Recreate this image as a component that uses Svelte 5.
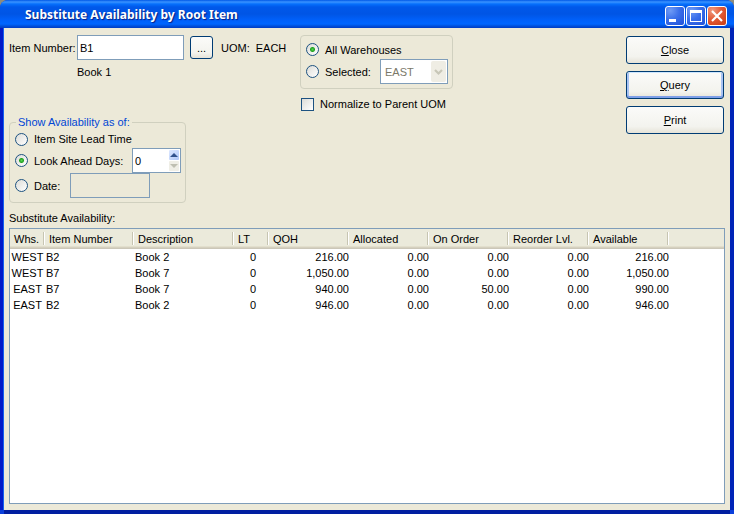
<script>
  let itemNumber = $state('B1');
  let warehouse = $state('all');
  let asOf = $state('days');
  let days = $state(0);
  let normalize = $state(false);

  const columns = [
    { name: 'Whs.', width: 35, align: 'center' },
    { name: 'Item Number', width: 89, align: 'left' },
    { name: 'Description', width: 100, align: 'left' },
    { name: 'LT', width: 35, align: 'mid' },
    { name: 'QOH', width: 80, align: 'right' },
    { name: 'Allocated', width: 80, align: 'right' },
    { name: 'On Order', width: 80, align: 'right' },
    { name: 'Reorder Lvl.', width: 80, align: 'right' },
    { name: 'Available', width: 80, align: 'right' }
  ];
  const rows = [
    ['WEST', 'B2', 'Book 2', '0', '216.00', '0.00', '0.00', '0.00', '216.00'],
    ['WEST', 'B7', 'Book 7', '0', '1,050.00', '0.00', '0.00', '0.00', '1,050.00'],
    ['EAST', 'B7', 'Book 7', '0', '940.00', '0.00', '50.00', '0.00', '990.00'],
    ['EAST', 'B2', 'Book 2', '0', '946.00', '0.00', '0.00', '0.00', '946.00']
  ];
</script>

<div class="window">
  <header class="titlebar">
    <h1>Substitute Availability by Root Item</h1>
    <div class="controls">
      <button class="ctl" aria-label="Minimize">
        <svg viewBox="0 0 18 18"><path d="M3 12h7v3H3z" fill="#fff" /></svg>
      </button>
      <button class="ctl" aria-label="Maximize">
        <svg viewBox="0 0 18 18"><path d="M3 3h12v12H3zM4 6v8h10V6z" fill="#fff" fill-rule="evenodd" /></svg>
      </button>
      <button class="ctl close" aria-label="Close window">
        <svg viewBox="0 0 18 18"><path d="M4 4l10 10M14 4L4 14" stroke="#fff" stroke-width="2.2" /></svg>
      </button>
    </div>
  </header>

  <main>
    <div class="top">
      <section class="left">
        <div class="item-row">
          <label for="item">Item Number:</label>
          <input id="item" class="field" type="text" bind:value={itemNumber} />
          <button class="btn browse">...</button>
          <span>UOM:</span>
          <span class="uom">EACH</span>
        </div>
        <p class="desc">Book 1</p>

        <fieldset class="asof">
          <legend>Show Availability as of:</legend>
          <div class="line short">
            <input id="lead" type="radio" name="asof" value="lead" bind:group={asOf} />
            <label for="lead">Item Site Lead Time</label>
          </div>
          <div class="line">
            <input id="ahead" type="radio" name="asof" value="days" bind:group={asOf} />
            <label for="ahead">Look Ahead Days:</label>
            <div class="spin">
              <input type="number" aria-label="Look ahead days" min="0" bind:value={days} />
              <div class="steps">
                <button aria-label="More days" onclick={() => (days += 1)}>
                  <svg viewBox="0 0 10 10"><path d="M5 3l4 4H1z" fill="#31528c" /></svg>
                </button>
                <button aria-label="Fewer days" disabled={days <= 0} onclick={() => (days -= 1)}>
                  <svg viewBox="0 0 10 10"><path d="M5 7L1 3h8z" fill="#bfbfb2" /></svg>
                </button>
              </div>
            </div>
          </div>
          <div class="line">
            <input id="date" type="radio" name="asof" value="date" bind:group={asOf} />
            <label for="date">Date:</label>
            <input class="field date" type="text" aria-label="As of date" disabled={asOf !== 'date'} />
          </div>
        </fieldset>
      </section>

      <section class="middle">
        <fieldset class="whs">
          <div class="line first">
            <input id="all" type="radio" name="whs" value="all" bind:group={warehouse} />
            <label for="all">All Warehouses</label>
          </div>
          <div class="line">
            <input id="selected" type="radio" name="whs" value="selected" bind:group={warehouse} />
            <label for="selected">Selected:</label>
            <div class="combo">
              <select aria-label="Warehouse" disabled={warehouse !== 'selected'}>
                <option>EAST</option>
                <option>WEST</option>
              </select>
              <svg viewBox="0 0 15 21"><path d="M4 9l3.500 3.500L11 9" fill="none" stroke="#c8c7b8" stroke-width="2.200" /></svg>
            </div>
          </div>
        </fieldset>
        <div class="line normalize">
          <input id="norm" type="checkbox" bind:checked={normalize} />
          <label for="norm">Normalize to Parent UOM</label>
        </div>
      </section>

      <section class="actions">
        <button class="btn"><u>C</u>lose</button>
        <button class="btn default"><u>Q</u>uery</button>
        <button class="btn"><u>P</u>rint</button>
      </section>
    </div>

    <h2 id="list-title">Substitute Availability:</h2>
    <div class="list">
      <table aria-labelledby="list-title">
        <colgroup>
          {#each columns as col}
            <col style="width: {col.width}px" />
          {/each}
          <col />
        </colgroup>
        <thead>
          <tr>
            {#each columns as col}
              <th scope="col">{col.name}</th>
            {/each}
            <td class="rest"></td>
          </tr>
        </thead>
        <tbody>
          {#each rows as row}
            <tr>
              {#each row as cell, i}
                <td class={columns[i].align}>{cell}</td>
              {/each}
              <td></td>
            </tr>
          {/each}
        </tbody>
      </table>
    </div>
  </main>
</div>

<style>
  :global(body) {
    background: #8e8c7c;
  }
  .window,
  .window * {
    box-sizing: border-box;
  }
  .window {
    display: flex;
    flex-direction: column;
    min-height: 100vh;
    background: #0a3fdc;
    border-radius: 8px 8px 0 0;
    font: 11px/16px 'Liberation Sans', Arial, sans-serif;
    color: #000;
  }
  button,
  input,
  select {
    font: inherit;
    color: inherit;
    margin: 0;
  }
  .titlebar {
    display: flex;
    align-items: center;
    justify-content: space-between;
    height: 28px;
    padding: 2px 7px 0 25px;
    border-radius: 8px 8px 0 0;
    background: linear-gradient(#0058e6 0, #3a93ff 2px, #0670fc 4px, #0058ea 7px, #0055e5 14px, #0060fa 20px, #0066ff 24px, #0050dc 26px, #003cc4 28px);
  }
  h1 {
    margin: 0;
    font: bold 12px/20px 'Noto Sans', 'Open Sans', sans-serif;
    color: #fff;
    text-shadow: 1px 1px 1px #0a1f80;
  }
  .controls {
    display: flex;
    gap: 1px;
    padding-top: 2px;
  }
  .ctl {
    width: 20px;
    height: 20px;
    padding: 0;
    border: 1px solid #fff;
    border-radius: 3px;
    background: radial-gradient(circle at 25% 20%, #6f9bf5, #3a6fea 45%, #1f50d8);
  }
  .ctl.close {
    background: radial-gradient(circle at 25% 20%, #f09a80, #e25a36 45%, #c83c12);
  }
  .ctl svg {
    display: block;
    width: 18px;
    height: 18px;
  }
  main {
    flex: 1;
    display: flex;
    flex-direction: column;
    margin: 0 4px 4px;
    padding: 7px 5px 6px;
    background: #ece9d8;
    box-shadow:
      -1px 0 #1560f0,
      -4px 0 #0019c8,
      4px 0 #0024b8,
      0 4px #001ea0;
  }
  .top {
    display: flex;
    align-items: flex-start;
  }
  .left {
    flex: 0 0 291px;
  }
  .item-row {
    display: flex;
    align-items: center;
    height: 25px;
  }
  .item-row label {
    flex: 0 0 68px;
    white-space: nowrap;
  }
  .field {
    width: 107px;
    height: 25px;
    padding: 0 2px;
    border: 1px solid #7f9db9;
    background: #fff;
  }
  .btn {
    height: 28px;
    padding: 0;
    border: 1px solid #003c74;
    border-radius: 3px;
    background: linear-gradient(#fbfbf9, #f3f3ee 75%, #e6e3d8);
  }
  .browse {
    width: 23px;
    height: 23px;
    margin: 0 8px 0 6px;
  }
  .uom {
    margin-left: 6px;
  }
  .desc {
    margin: 4px 0 34px 68px;
  }
  fieldset {
    margin: 0;
    min-width: 0;
    border: 1px solid #d0d0bf;
    border-radius: 4px;
  }
  .asof {
    width: 177px;
    padding: 0 4px 4px 5px;
  }
  legend {
    margin-left: 1px;
    padding: 0 2px;
    color: #0046d5;
  }
  .line {
    display: flex;
    align-items: center;
    height: 25px;
    white-space: nowrap;
  }
  .line.short {
    height: 18px;
  }
  .line.first {
    height: 19px;
  }
  .line > label {
    margin-left: 6px;
  }
  input[type='radio'],
  input[type='checkbox'] {
    appearance: none;
    flex: none;
    width: 13px;
    height: 13px;
    border: 1px solid #1d5281;
    background: linear-gradient(135deg, #dcdcd7, #fff);
  }
  input[type='radio'] {
    border-radius: 50%;
  }
  input[type='radio']:checked {
    background: radial-gradient(circle, #55d551 0, #21a121 2px, #21a12100 3px), linear-gradient(135deg, #dcdcd7, #fff);
  }
  .spin {
    display: flex;
    width: 49px;
    height: 25px;
    margin-left: auto;
    padding: 1px;
    border: 1px solid #7f9db9;
    background: #fff;
  }
  .spin input {
    flex: 1;
    min-width: 0;
    padding: 0 1px;
    border: 0;
    outline: 0;
    appearance: textfield;
    background: transparent;
  }
  .spin input::-webkit-inner-spin-button {
    appearance: none;
  }
  .steps {
    display: flex;
    flex-direction: column;
    gap: 1px;
    width: 10px;
  }
  .steps button {
    flex: 1;
    padding: 0;
    border: 0;
    border-radius: 1px;
    background: linear-gradient(135deg, #dde8ff, #b0c8f8);
  }
  .steps button:disabled {
    background: #efeee6;
  }
  .steps svg {
    display: block;
    width: 10px;
    height: 10px;
  }
  .date {
    width: 80px;
    margin-left: 10px;
  }
  .date:disabled {
    background: #ece9d8;
  }
  .whs {
    width: 153px;
    padding: 4px 4px 4px 5px;
  }
  .combo {
    position: relative;
    width: 68px;
    height: 25px;
    margin-left: auto;
  }
  select {
    appearance: none;
    width: 100%;
    height: 100%;
    padding: 0 18px 0 4px;
    border: 1px solid #7f9db9;
    border-radius: 0;
    background: #fff;
  }
  select:disabled {
    color: #7b7869;
    opacity: 1;
  }
  .combo svg {
    position: absolute;
    top: 2px;
    right: 2px;
    width: 15px;
    height: 21px;
    border-radius: 2px;
    background: #efede4;
    pointer-events: none;
  }
  .normalize {
    height: 16px;
    margin: 7px 0 0 1px;
  }
  .actions {
    display: flex;
    flex-direction: column;
    gap: 7px;
    width: 98px;
    margin: 1px 1px 0 auto;
  }
  .default {
    box-shadow:
      inset 0 1px #cee7ff,
      inset 0 -2px #7e9fe8,
      inset 2px 0 #a9c3f3,
      inset -2px 0 #a9c3f3;
  }
  h2 {
    margin: 7px 0 2px;
    font: inherit;
  }
  .list {
    flex: 1;
    border: 1px solid #7f9db9;
    background: #fff;
  }
  table {
    width: 100%;
    table-layout: fixed;
    border-collapse: separate;
    border-spacing: 0;
  }
  thead th,
  .rest {
    height: 20px;
    padding: 0 0 0 4px;
    font-weight: normal;
    text-align: left;
    white-space: nowrap;
    background:
      linear-gradient(#c7c5b2, #c7c5b2) calc(100% - 1px) 3px / 1px 13px no-repeat,
      linear-gradient(#fff, #fff) 100% 3px / 1px 13px no-repeat,
      linear-gradient(#ebeadb 17px, #e2dfcd 17px 18px, #d5d0bf 18px 19px, #cbc7b8 19px);
  }
  .rest {
    background: linear-gradient(#ebeadb 17px, #e2dfcd 17px 18px, #d5d0bf 18px 19px, #cbc7b8 19px);
  }
  tbody td {
    height: 16px;
    padding: 0 1px;
    white-space: nowrap;
  }
  td.center {
    padding: 0;
    text-align: center;
  }
  td.mid {
    padding-right: 13px;
    text-align: right;
  }
  td.right {
    padding: 0;
    text-align: right;
  }
</style>
